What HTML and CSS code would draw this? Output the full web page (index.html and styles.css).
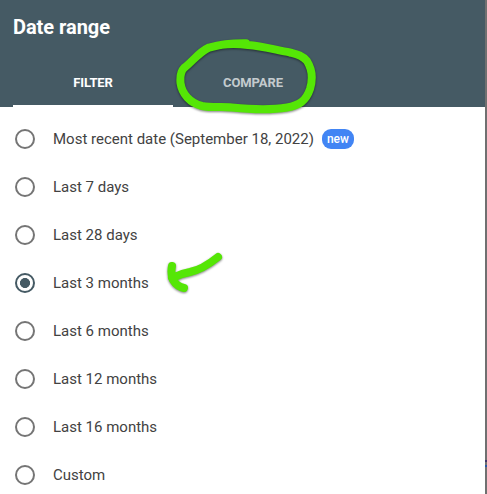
FILE: index.html
```
<!DOCTYPE html>
<html lang="en">
<head>
<meta charset="utf-8">
<title>Date range</title>
<link rel="stylesheet" href="styles.css">
</head>
<body>
<div class="page">
  <main class="dialog">
    <header class="header">
      <h1 class="title">Date range</h1>
      <nav class="tabs">
        <div class="tab tab-active">FILTER</div>
        <div class="tab">COMPARE</div>
      </nav>
    </header>
    <div class="options">
      <div class="option"><span class="radio"></span><span class="label">Most recent date (September 18, 2022)</span><span class="badge">new</span></div>
      <div class="option"><span class="radio"></span><span class="label">Last 7 days</span></div>
      <div class="option"><span class="radio"></span><span class="label">Last 28 days</span></div>
      <div class="option"><span class="radio radio-checked"></span><span class="label">Last 3 months</span></div>
      <div class="option"><span class="radio"></span><span class="label">Last 6 months</span></div>
      <div class="option"><span class="radio"></span><span class="label">Last 12 months</span></div>
      <div class="option"><span class="radio"></span><span class="label">Last 16 months</span></div>
      <div class="option"><span class="radio"></span><span class="label">Custom</span></div>
    </div>
  </main>
  <aside class="backdrop"><span class="mark mark-purple"></span><span class="mark mark-blue"></span></aside>
  <svg class="ink" width="487" height="494" viewBox="0 0 487 494">
    <path d="M246 43.2C231 43 218 45 209 47.5C199 52 193 61 184 68C180 72 180 77 180.500 83C182 94 190 103 202 106C212 108 222 106.500 232 107.500C252 109.500 272 110 287 107.500C299 105.500 306 101 310 89C313 79 312 69 307 61C302 55 296 54 290 52.500C276 50 262 46 248 45C234 43 222 43.500 210 47.500"/>
    <path d="M218 257C208 265 200 270 190 272C184 273 178 275 172 278M172 266C171 271 171 275 173 280C176 285 179 287 184 288"/>
  </svg>
</div>
</body>
</html>
```
FILE: styles.css
```
body {
  margin: 0;
  background: #fff;
  font-family: Roboto, "Liberation Sans", sans-serif;
}

.page {
  position: relative;
  display: flex;
  width: 487px;
  height: 494px;
  overflow: hidden;
}

.dialog {
  width: 485px;
}

.header {
  display: flex;
  flex-direction: column;
  justify-content: space-between;
  box-sizing: border-box;
  height: 107px;
  padding: 15px 13px 0;
  background: #455a64;
  color: #fff;
}

.title {
  margin: 0;
  font-size: 20px;
  font-weight: 700;
  letter-spacing: -0.04px;
  line-height: 24px;
}

.tabs {
  display: flex;
}

.tab {
  box-sizing: border-box;
  width: 160px;
  height: 48px;
  border-bottom: 2px solid transparent;
  color: rgba(255, 255, 255, 0.7);
  font-size: 13px;
  font-weight: 700;
  letter-spacing: -0.1px;
  line-height: 48px;
  text-align: center;
}

.tab-active {
  border-bottom-color: #fff;
  color: #fff;
}

.options {
  padding: 8px 15px 0;
}

.option {
  display: flex;
  align-items: center;
  height: 48px;
}

.radio {
  box-sizing: border-box;
  width: 20px;
  height: 20px;
  margin-right: 18px;
  border: 2px solid #757575;
  border-radius: 50%;
}

.radio-checked {
  border-color: #455a64;
  background: radial-gradient(circle, #455a64 4.7px, transparent 5.3px);
}

.label {
  color: #424242;
  font-size: 15px;
}

.badge {
  width: 32px;
  height: 20px;
  margin-left: 8px;
  border-radius: 9px;
  background: #4285f4;
  color: #fff;
  font-size: 12px;
  font-weight: 500;
  line-height: 20px;
  text-align: center;
}

.backdrop {
  display: flex;
  flex-direction: column;
  gap: 3px;
  box-sizing: border-box;
  width: 2px;
  padding-top: 460px;
  background: #707070;
}

.mark {
  height: 2px;
}

.mark-purple {
  background: #3f3469;
}

.mark-blue {
  background: #2856a5;
}

.ink {
  position: absolute;
  top: 0;
  left: 0;
  fill: none;
  stroke: #55e606;
  stroke-width: 8px;
  stroke-linecap: round;
  stroke-linejoin: round;
  filter: drop-shadow(0 1px 1px rgba(0, 0, 0, 0.5));
}
```
